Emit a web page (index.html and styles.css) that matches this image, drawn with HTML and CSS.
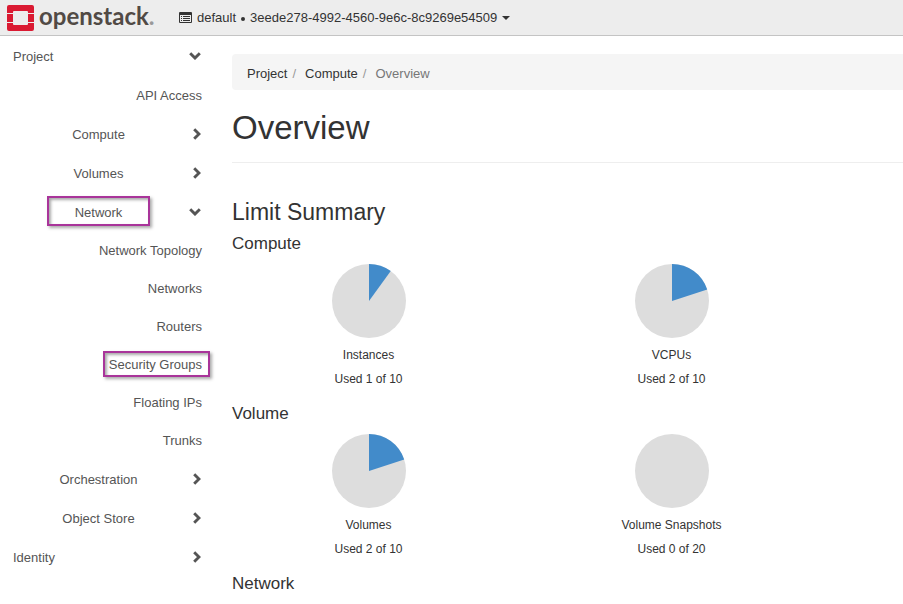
FILE: index.html
```html
<!DOCTYPE html>
<html lang="en">
<head>
<meta charset="utf-8">
<title>Overview - OpenStack Dashboard</title>
<link rel="stylesheet" href="styles.css">
</head>
<body>
<svg class="symbols" aria-hidden="true">
  <symbol id="down" viewBox="0 0 12 8"><path d="M1.200 1.200 6 6 10.800 1.200" fill="none" stroke="currentColor" stroke-width="2.900"/></symbol>
  <symbol id="right" viewBox="0 0 8 12"><path d="M1.200 1.200 6 6 1.200 10.800" fill="none" stroke="currentColor" stroke-width="2.900"/></symbol>
</svg>
<header class="topbar">
  <a class="brand" href="#" aria-label="openstack">
    <svg class="mark" viewBox="0 0 27 26" aria-hidden="true">
      <path fill="#da1a32" d="M2 0h23a2 2 0 0 1 2 2v6h-6V7a1 1 0 0 0-1-1H7a1 1 0 0 0-1 1v1H0V2a2 2 0 0 1 2-2zM0 9h6v8H0zM21 9h6v8h-6zM0 18h6v1a1 1 0 0 0 1 1h13a1 1 0 0 0 1-1v-1h6v6a2 2 0 0 1-2 2H2a2 2 0 0 1-2-2z"/>
    </svg>
    <span class="wordmark">openstack<span class="reg">.</span></span>
  </a>
  <button class="context" type="button">
    <svg class="list" viewBox="0 0 13 11" aria-hidden="true"><path fill="currentColor" fill-rule="evenodd" d="M1 0h11a1 1 0 0 1 1 1v9a1 1 0 0 1-1 1H1a1 1 0 0 1-1-1V1a1 1 0 0 1 1-1zM1 3v7h11V3zM2 4h1v1H2zM4 4h7v1H4zM2 6h1v1H2zM4 6h7v1H4zM2 8h1v1H2zM4 8h7v1H4z"/></svg>
    <span>default</span><i class="dot"></i><span>3eede278-4992-4560-9e6c-8c9269e54509</span><i class="caret"></i>
  </button>
</header>
<div class="layout">
  <nav class="sidebar" aria-label="Dashboard">
    <a class="row top" href="#"><span>Project</span><svg class="down"><use href="#down"/></svg></a>
    <a class="row leaf tall" href="#"><span>API Access</span></a>
    <a class="row" href="#"><span>Compute</span><svg class="right"><use href="#right"/></svg></a>
    <a class="row" href="#"><span>Volumes</span><svg class="right"><use href="#right"/></svg></a>
    <a class="row" href="#"><span class="marked wide">Network</span><svg class="down"><use href="#down"/></svg></a>
    <a class="row leaf" href="#"><span>Network Topology</span></a>
    <a class="row leaf" href="#"><span>Networks</span></a>
    <a class="row leaf" href="#"><span>Routers</span></a>
    <a class="row leaf" href="#"><span class="marked">Security Groups</span></a>
    <a class="row leaf" href="#"><span>Floating IPs</span></a>
    <a class="row leaf" href="#"><span>Trunks</span></a>
    <a class="row" href="#"><span>Orchestration</span><svg class="right"><use href="#right"/></svg></a>
    <a class="row" href="#"><span>Object Store</span><svg class="right"><use href="#right"/></svg></a>
    <a class="row top" href="#"><span>Identity</span><svg class="right"><use href="#right"/></svg></a>
  </nav>
  <main class="content">
    <ol class="breadcrumb"><li><a href="#">Project</a></li><li><a href="#">Compute</a></li><li class="active">Overview</li></ol>
    <h1>Overview</h1>
    <h2>Limit Summary</h2>
    <section>
      <h3>Compute</h3>
      <div class="charts">
        <figure><svg class="pie" viewBox="0 0 74 74"><circle cx="37" cy="37" r="37"/><path d="M37 37V0A37 37 0 0 1 58.750 7.070z"/></svg><figcaption>Instances<span>Used 1 of 10</span></figcaption></figure>
        <figure><svg class="pie" viewBox="0 0 74 74"><circle cx="37" cy="37" r="37"/><path d="M37 37V0A37 37 0 0 1 72.190 25.570z"/></svg><figcaption>VCPUs<span>Used 2 of 10</span></figcaption></figure>
      </div>
    </section>
    <section>
      <h3>Volume</h3>
      <div class="charts">
        <figure><svg class="pie" viewBox="0 0 74 74"><circle cx="37" cy="37" r="37"/><path d="M37 37V0A37 37 0 0 1 72.190 25.570z"/></svg><figcaption>Volumes<span>Used 2 of 10</span></figcaption></figure>
        <figure><svg class="pie" viewBox="0 0 74 74"><circle cx="37" cy="37" r="37"/></svg><figcaption>Volume Snapshots<span>Used 0 of 20</span></figcaption></figure>
      </div>
    </section>
    <section>
      <h3>Network</h3>
    </section>
  </main>
</div>
</body>
</html>
```
FILE: styles.css
```css
* { box-sizing: border-box; }
body {
  margin: 0;
  background: #fff;
  color: #333;
  font: 13px/18px "Liberation Sans", Arial, sans-serif;
}
a { color: inherit; text-decoration: none; }
.symbols { display: none; }

.topbar {
  display: flex;
  align-items: center;
  height: 36px;
  padding-left: 7px;
  background: #ededed;
  border-bottom: 1px solid #c4c4c4;
}
.brand { display: flex; align-items: center; gap: 5px; width: 172px; }
.mark { width: 27px; height: 26px; }
.wordmark {
  padding-bottom: 4px;
  font: bold 24px/28px Lato, sans-serif;
  color: #514a45;
}
.reg { color: #999; }
.context {
  display: flex;
  align-items: center;
  padding: 0;
  border: 0;
  background: none;
  color: #333;
  font: inherit;
}
.list { width: 13px; height: 11px; margin-right: 5px; }
.dot { width: 4px; height: 4px; margin: 3px 5px 0; border-radius: 50%; background: #333; }
.caret { margin-left: 5px; border: 4px solid transparent; border-top-color: #333; border-bottom: 0; }

.layout { display: grid; grid-template-columns: 202px minmax(0, 1fr); column-gap: 30px; }
.sidebar { padding-left: 13px; color: #555; }
.row {
  display: grid;
  grid-template-columns: 1fr 18px;
  align-items: center;
  justify-items: center;
  height: 39px;
  padding-top: 2px;
}
.row svg { justify-self: end; margin: 0 1px 1px 0; }
.top { justify-items: start; }
.leaf { grid-template-columns: 1fr; justify-items: end; height: 38px; }
.tall { height: 39px; }
.down { width: 12px; height: 8px; }
.right { width: 8px; height: 12px; }
.marked {
  margin: -5px -8px -3px -6px;
  padding: 3px 6px 1px 4px;
  border: 2px solid #a9349a;
  box-shadow: 2px 2px 3px #aaa, inset 2px 2px 3px #aaa;
}
.wide { margin: -8px 0 -4px; padding: 6px 26px 2px; }

.content { padding-top: 18px; }
.breadcrumb {
  display: flex;
  margin: 0;
  padding: 11px 15px 7px;
  border-radius: 4px 0 0 4px;
  background: #f5f5f5;
  list-style: none;
}
.breadcrumb li + li::before { content: "/"; padding: 0 9px 0 5px; color: #999; }
.breadcrumb .active { color: #777; }
h1, h2, h3 { margin: 0; font-weight: normal; }
h1 { padding: 20px 0 16px; border-bottom: 1px solid #eee; font-size: 33px; line-height: 36px; }
h2 { margin-top: 35px; font-size: 23px; line-height: 28px; }
h3 { margin-top: 7px; font-size: 17px; line-height: 22px; }
section + section { margin-top: 15px; }
.charts { display: grid; grid-template-columns: repeat(2, 303px); margin-left: -15px; }
figure { display: flex; flex-direction: column; align-items: center; margin: 9px 0 0; }
.pie { width: 74px; height: 74px; fill: #ddd; }
.pie path { fill: #428bca; }
figcaption { margin-top: 8px; font-size: 12px; line-height: 18px; text-align: center; }
figcaption span { display: block; margin-top: 6px; }
```
